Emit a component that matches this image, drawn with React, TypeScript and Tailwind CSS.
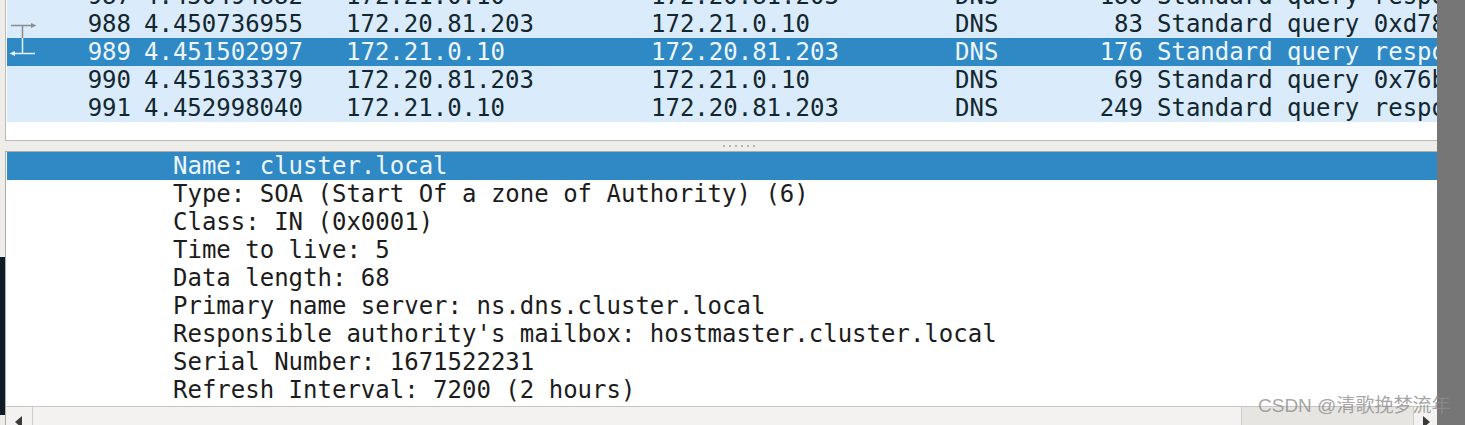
import React from 'react';

type Packet = {
  no: string;
  time: string;
  src: string;
  dst: string;
  proto: string;
  len: string;
  info: string;
  mark?: 'req' | 'resp';
  selected?: boolean;
};

const packets: Packet[] = [
  { no: '987', time: '4.450494882', src: '172.21.0.10', dst: '172.20.81.203', proto: 'DNS', len: '180', info: 'Standard query response 0x4c1b' },
  { no: '988', time: '4.450736955', src: '172.20.81.203', dst: '172.21.0.10', proto: 'DNS', len: '83', info: 'Standard query 0xd78a SOA cluster.local', mark: 'req' },
  { no: '989', time: '4.451502997', src: '172.21.0.10', dst: '172.20.81.203', proto: 'DNS', len: '176', info: 'Standard query response 0xd78a', mark: 'resp', selected: true },
  { no: '990', time: '4.451633379', src: '172.20.81.203', dst: '172.21.0.10', proto: 'DNS', len: '69', info: 'Standard query 0x76b0 A kubernetes' },
  { no: '991', time: '4.452998040', src: '172.21.0.10', dst: '172.20.81.203', proto: 'DNS', len: '249', info: 'Standard query response 0x76b0' },
];

const details = [
  'Name: cluster.local',
  'Type: SOA (Start Of a zone of Authority) (6)',
  'Class: IN (0x0001)',
  'Time to live: 5',
  'Data length: 68',
  'Primary name server: ns.dns.cluster.local',
  "Responsible authority's mailbox: hostmaster.cluster.local",
  'Serial Number: 1671522231',
  'Refresh Interval: 7200 (2 hours)',
];

const mono = "font-['DejaVu_Sans_Mono',monospace] text-[24px] leading-[28px]";

function RelationMark({ kind, light }: { kind?: 'req' | 'resp'; light?: boolean }) {
  const c = light ? '#eaf2fa' : '#8c8c8c';
  if (kind === 'req') {
    return (
      <svg width="33" height="28" viewBox="0 0 33 28">
        <line x1="4" y1="15.5" x2="26" y2="15.5" stroke={c} strokeWidth="1.5" />
        <path d="M24 13 L29.5 15.5 L24 18 Z" fill={c} />
        <line x1="15.5" y1="15" x2="15.5" y2="28" stroke={c} strokeWidth="1.5" />
      </svg>
    );
  }
  if (kind === 'resp') {
    return (
      <svg width="33" height="28" viewBox="0 0 33 28">
        <line x1="15.5" y1="0" x2="15.5" y2="15" stroke={c} strokeWidth="1.5" />
        <line x1="6" y1="15.5" x2="28" y2="15.5" stroke={c} strokeWidth="1.5" />
        <path d="M8 13 L2.5 15.5 L8 18 Z" fill={c} />
      </svg>
    );
  }
  return <div className="w-[33px]" />;
}

function PacketRow({ p }: { p: Packet }) {
  return (
    <div
      className={`flex h-[28px] items-center whitespace-pre ${mono} ${
        p.selected ? 'bg-[#2f89c5] text-[#eef6fd]' : 'bg-[#daebfc] text-[#12272e]'
      }`}
    >
      <div className="w-[33px] shrink-0">
        <RelationMark kind={p.mark} light={p.selected} />
      </div>
      <div className="w-[91px] shrink-0 text-right">{p.no}</div>
      <div className="w-[215px] shrink-0 pl-[13px]">{p.time}</div>
      <div className="w-[305px] shrink-0">{p.src}</div>
      <div className="w-[304px] shrink-0">{p.dst}</div>
      <div className="w-[110px] shrink-0">{p.proto}</div>
      <div className="w-[78px] shrink-0 text-right">{p.len}</div>
      <div className="flex-1 overflow-hidden pl-[14px]">{p.info}</div>
    </div>
  );
}

export default function App() {
  return (
    <div className="relative flex h-[425px] w-[1465px] overflow-hidden bg-[#efedea]">
      {/* left gutter with a bit of another window peeking through */}
      <div className="flex w-[5px] shrink-0 flex-col">
        <div className="mt-[257px] h-[158px] bg-[#0f1b27]" />
      </div>

      <div className="flex min-w-0 flex-1 flex-col">
        {/* packet list */}
        <div className="h-[141px] shrink-0 overflow-hidden border-b border-l border-[#bdbab6] bg-white">
          <div className="-mt-[18px] pl-[1px]">
            {packets.map((p) => (
              <PacketRow key={p.no} p={p} />
            ))}
          </div>
        </div>

        {/* splitter */}
        <div className="flex h-[10px] shrink-0 items-center pl-[718px]">
          <div className="flex gap-[4px]">
            {[0, 1, 2, 3, 4, 5].map((i) => (
              <div key={i} className="h-[2px] w-[2px] bg-[#b8b4af]" />
            ))}
          </div>
        </div>

        {/* packet details */}
        <div className="flex min-h-0 flex-1 flex-col border-l border-t border-[#b0aca7] bg-white">
          <div className="min-h-0 flex-1 overflow-hidden pl-[1px]">
            {details.map((d, i) => (
              <div
                key={d}
                className={`h-[28px] whitespace-pre pl-[166px] ${mono} ${
                  i === 0 ? 'bg-[#2f89c5] text-[#eef6fd]' : 'text-[#1c1c1c]'
                }`}
              >
                {d}
              </div>
            ))}
          </div>

          {/* horizontal scrollbar */}
          <div className="flex h-[19px] shrink-0 border-t border-[#c9c6c2] bg-[#f3f2f0]">
            <div className="flex w-[27px] items-end justify-start border-r border-[#cfccc8] pl-[9px]">
              <div className="h-0 w-0 border-y-[6px] border-r-[7px] border-y-transparent border-r-[#3a3a3a] translate-y-[3px]" />
            </div>
            <div className="flex-1" />
            <div className="w-[173px] border-x border-[#cfccc8] bg-[#e7e5e2]" />
            <div className="flex w-[23px] items-end pl-[9px]">
              <div className="h-0 w-0 border-y-[6px] border-l-[7px] border-y-transparent border-l-[#3a3a3a] translate-y-[3px]" />
            </div>
          </div>
        </div>
      </div>

      <div className="w-[28px] shrink-0 bg-[#767676]" />

      {/* watermark */}
      <div className="pointer-events-none absolute left-[1258px] top-[394px] whitespace-nowrap font-['Liberation_Sans','Noto_Sans_CJK_SC',sans-serif] text-[19px] leading-[24px] text-[#8e8e8e]/80">
        CSDN @清歌挽梦流年
      </div>
    </div>
  );
}
